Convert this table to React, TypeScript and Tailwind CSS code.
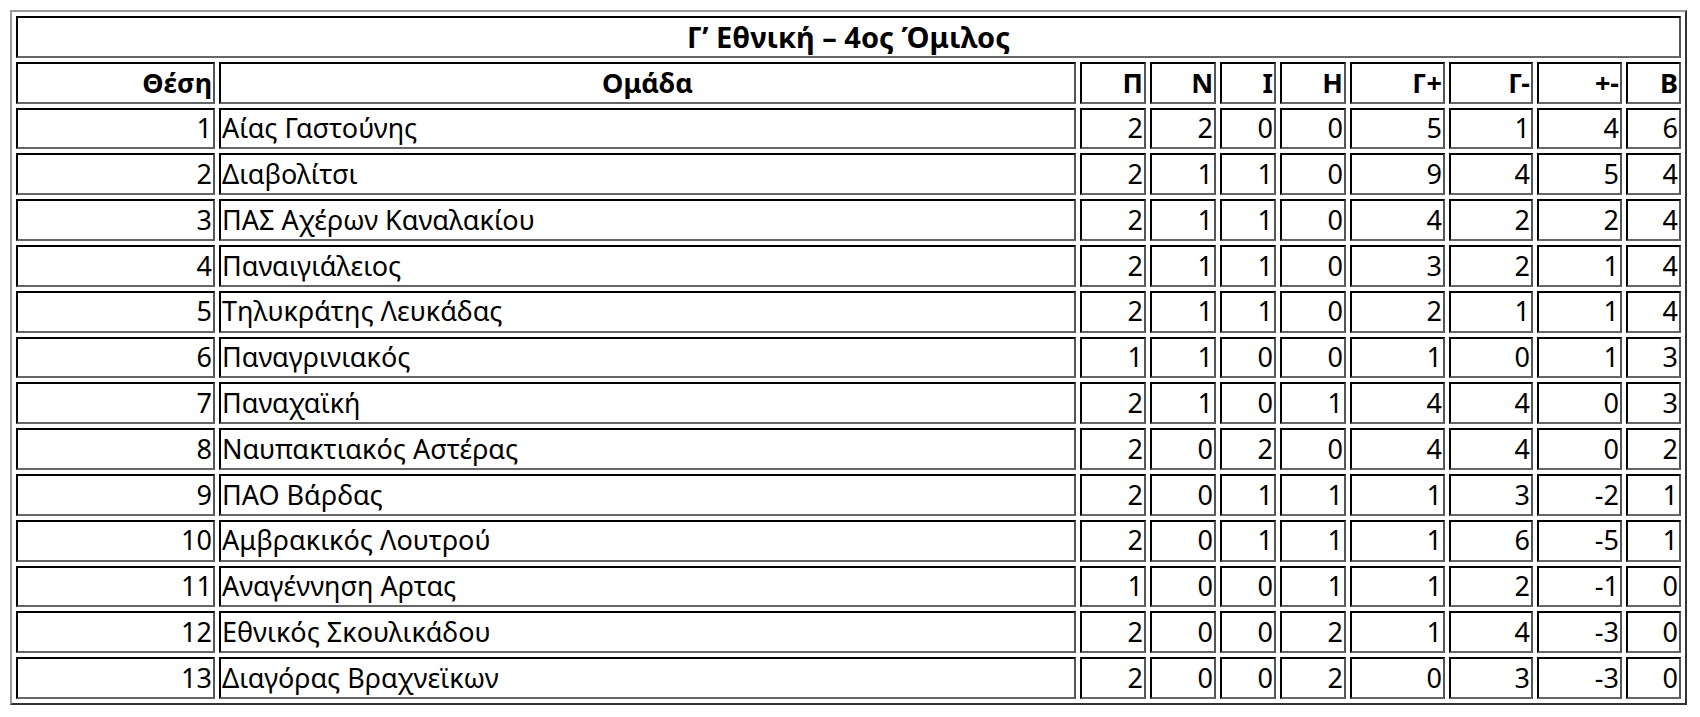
import React from "react";

const rows: [number, string, number, number, number, number, number, number, number, number][] = [
  [1, "Αίας Γαστούνης", 2, 2, 0, 0, 5, 1, 4, 6],
  [2, "Διαβολίτσι", 2, 1, 1, 0, 9, 4, 5, 4],
  [3, "ΠΑΣ Αχέρων Καναλακίου", 2, 1, 1, 0, 4, 2, 2, 4],
  [4, "Παναιγιάλειος", 2, 1, 1, 0, 3, 2, 1, 4],
  [5, "Τηλυκράτης Λευκάδας", 2, 1, 1, 0, 2, 1, 1, 4],
  [6, "Παναγρινιακός", 1, 1, 0, 0, 1, 0, 1, 3],
  [7, "Παναχαϊκή", 2, 1, 0, 1, 4, 4, 0, 3],
  [8, "Ναυπακτιακός Αστέρας", 2, 0, 2, 0, 4, 4, 0, 2],
  [9, "ΠΑΟ Βάρδας", 2, 0, 1, 1, 1, 3, -2, 1],
  [10, "Αμβρακικός Λουτρού", 2, 0, 1, 1, 1, 6, -5, 1],
  [11, "Αναγέννηση Αρτας", 1, 0, 0, 1, 1, 2, -1, 0],
  [12, "Εθνικός Σκουλικάδου", 2, 0, 0, 2, 1, 4, -3, 0],
  [13, "Διαγόρας Βραχνεϊκων", 2, 0, 0, 2, 0, 3, -3, 0],
];

const widths = [199, 857, 66, 66, 56, 66, 95, 84, 85, 55];
const heads = ["Θέση", "Ομάδα", "Π", "Ν", "Ι", "Η", "Γ+", "Γ-", "+-", "Β"];

const cell =
  "border-2 border-t-black border-l-black border-r-[#555] border-b-[#666] h-[41.8px] px-px py-0 align-middle leading-[1.2] whitespace-nowrap overflow-hidden";

export default function App() {
  return (
    <div className="bg-white min-h-[717px] w-[1700px] pt-[10px] pl-[10px] font-['Noto_Sans',sans-serif]">
      <table className="table-fixed border-separate border-spacing-[4px] border-2 border-t-[#999] border-l-[#999] border-r-[#333] border-b-[#333] text-black w-[1677px]">
        <colgroup>
          {widths.map((w, i) => (
            <col key={i} style={{ width: w }} />
          ))}
        </colgroup>
        <tbody>
          <tr>
            <td colSpan={10} className={`${cell} text-center font-bold text-[29px]`}>
              Γ’ Εθνική – 4ος Όμιλος
            </td>
          </tr>
          <tr>
            {heads.map((h, i) => (
              <th
                key={i}
                className={`${cell} font-bold text-[27px] ${i === 1 ? "text-center" : "text-right"}`}
              >
                {h}
              </th>
            ))}
          </tr>
          {rows.map((r) => (
            <tr key={r[0]}>
              {r.map((v, i) => (
                <td
                  key={i}
                  className={`${cell} text-[27px] ${i === 1 ? "text-left" : "text-right"}`}
                >
                  {v}
                </td>
              ))}
            </tr>
          ))}
        </tbody>
      </table>
    </div>
  );
}
